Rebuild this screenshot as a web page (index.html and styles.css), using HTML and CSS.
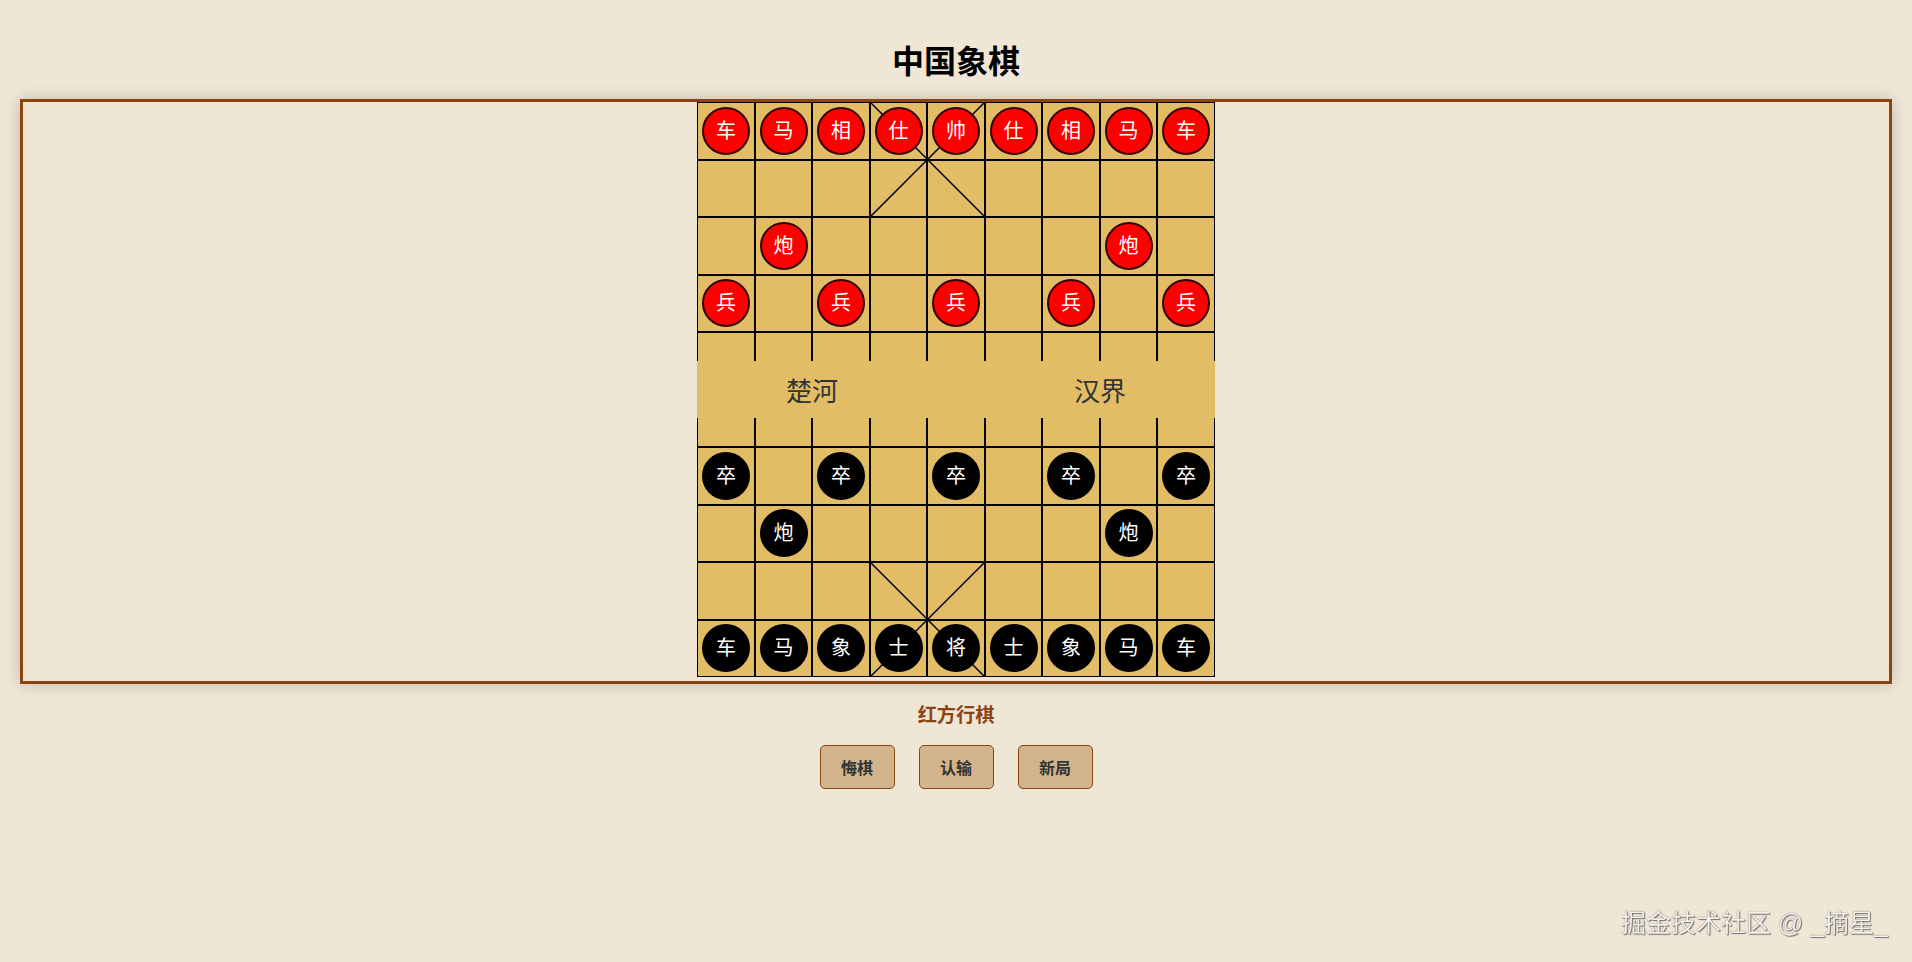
FILE: index.html
```html
<!DOCTYPE html>
<html lang="zh-CN">
<head>
    <meta charset="UTF-8">
    <meta name="viewport" content="width=device-width, initial-scale=1.0">
    <title>中国象棋</title>
    <link rel="stylesheet" href="styles.css">
</head>
<body>

    <h1>中国象棋</h1>

    <div class="board-wrap">
        <div class="board" id="board">
            <!-- 九宫斜线 -->
            <svg class="palace palace-top" viewBox="0 0 115 115">
                <line x1="0" y1="0" x2="115" y2="115"></line>
                <line x1="115" y1="0" x2="0" y2="115"></line>
            </svg>
            <svg class="palace palace-bottom" viewBox="0 0 115 115">
                <line x1="0" y1="0" x2="115" y2="115"></line>
                <line x1="115" y1="0" x2="0" y2="115"></line>
            </svg>

            <!-- 楚河汉界 -->
            <div class="river">
                <span>楚河</span>
                <span>汉界</span>
            </div>
        </div>
    </div>

    <div id="status" class="status">红方行棋</div>

    <div class="controls">
        <button type="button" class="btn" onclick="undoMove()">悔棋</button>
        <button type="button" class="btn" onclick="resign()">认输</button>
        <button type="button" class="btn" onclick="newGame()">新局</button>
    </div>

    <div class="watermark">掘金技术社区 @ _摘星_</div>

    <script>
        const board = document.getElementById('board');
        const statusText = document.getElementById('status');

        const redBack = ['车', '马', '相', '仕', '帅', '仕', '相', '马', '车'];
        const blackBack = ['车', '马', '象', '士', '将', '士', '象', '马', '车'];

        let pieces = [];
        let history = [];
        let turn = 'red';
        let selected = null;

        function initPieces() {
            const list = [];
            redBack.forEach((name, col) => list.push({ row: 0, col, name, side: 'red' }));
            list.push({ row: 2, col: 1, name: '炮', side: 'red' }, { row: 2, col: 7, name: '炮', side: 'red' });
            [0, 2, 4, 6, 8].forEach(col => list.push({ row: 3, col, name: '兵', side: 'red' }));

            [0, 2, 4, 6, 8].forEach(col => list.push({ row: 6, col, name: '卒', side: 'black' }));
            list.push({ row: 7, col: 1, name: '炮', side: 'black' }, { row: 7, col: 7, name: '炮', side: 'black' });
            blackBack.forEach((name, col) => list.push({ row: 9, col, name, side: 'black' }));
            return list;
        }

        function renderBoard() {
            board.querySelectorAll('.cell').forEach(cell => cell.remove());

            for (let row = 0; row < 10; row++) {
                for (let col = 0; col < 9; col++) {
                    const cell = document.createElement('div');
                    cell.className = 'cell';
                    cell.onclick = () => clickCell(row, col);

                    const piece = pieces.find(p => p.row === row && p.col === col);
                    if (piece) {
                        const el = document.createElement('div');
                        el.className = 'piece ' + piece.side;
                        if (piece === selected) el.classList.add('selected');
                        el.innerText = piece.name;
                        cell.appendChild(el);
                    }
                    board.appendChild(cell);
                }
            }

            statusText.innerText = turn === 'red' ? '红方行棋' : '黑方行棋';
        }

        function clickCell(row, col) {
            const target = pieces.find(p => p.row === row && p.col === col);

            if (target && target.side === turn) {
                selected = target;
            } else if (selected) {
                history.push(pieces.map(p => ({ ...p })));
                pieces = pieces.filter(p => p !== target);
                selected.row = row;
                selected.col = col;
                selected = null;
                turn = turn === 'red' ? 'black' : 'red';
            }
            renderBoard();
        }

        function undoMove() {
            if (!history.length) return;
            pieces = history.pop();
            selected = null;
            turn = turn === 'red' ? 'black' : 'red';
            renderBoard();
        }

        function resign() {
            statusText.innerText = turn === 'red' ? '红方认输，黑方胜' : '黑方认输，红方胜';
        }

        function newGame() {
            pieces = initPieces();
            history = [];
            turn = 'red';
            selected = null;
            renderBoard();
        }

        newGame();
    </script>

</body>
</html>
```

FILE: styles.css
```css
* {
    box-sizing: border-box;
}

body {
    margin: 0;
    padding: 20px;
    background-color: #f0e6d6;
    font-family: 'Liberation Sans', 'Noto Sans CJK SC', sans-serif;
    text-align: center;
}

h1 {
    font-size: 32px;
    line-height: 37px;
    margin: 24px 0 18px;
    color: #000;
}

.board-wrap {
    display: flex;
    justify-content: center;
    padding-bottom: 4px;
    border: 3px solid #8b4513;
    box-shadow: 0 0 15px rgba(0, 0, 0, 0.2);
}

.board {
    position: relative;
    display: grid;
    grid-template-columns: repeat(9, 57.5px);
    grid-template-rows: repeat(10, 57.5px);
    background-color: #e3bd66;
}

.cell {
    display: flex;
    justify-content: center;
    align-items: center;
    border: 1px solid #000;
    cursor: pointer;
}

.piece {
    position: relative;
    z-index: 2;
    display: flex;
    justify-content: center;
    align-items: center;
    width: 48px;
    height: 48px;
    border-radius: 50%;
    border: 2px solid #300;
    color: #fff;
    font-size: 20px;
    line-height: 1;
}

.piece.red {
    background-color: #f00;
}

.piece.black {
    background-color: #000;
    border-color: #000;
}

.piece.selected {
    box-shadow: 0 0 0 3px #ffd700;
}

.palace {
    position: absolute;
    left: 172.5px;
    width: 115px;
    height: 115px;
    z-index: 1;
    pointer-events: none;
}

.palace-top {
    top: 0;
}

.palace-bottom {
    top: 460px;
}

.palace line {
    stroke: #000;
    stroke-width: 1.5;
}

.river {
    position: absolute;
    left: 0;
    right: 0;
    top: 258.75px;
    height: 57.5px;
    z-index: 1;
    display: flex;
    justify-content: center;
    align-items: center;
    gap: 144px;
    background-color: #e3bd66;
    color: #333;
    font-size: 26px;
    pointer-events: none;
}

.river span {
    width: 144px;
}

.status {
    margin-top: 20px;
    font-size: 19.2px;
    line-height: 23px;
    font-weight: bold;
    color: #8b4513;
}

.controls {
    display: flex;
    justify-content: center;
    gap: 24px;
    margin-top: 18px;
}

.btn {
    width: 75px;
    height: 44px;
    padding: 0;
    font-family: 'Liberation Sans', 'Noto Sans CJK SC', sans-serif;
    font-size: 16px;
    font-weight: bold;
    color: #333;
    background-color: #d2b48c;
    border: 1px solid #8b4513;
    border-radius: 5px;
    cursor: pointer;
}

.btn:hover {
    background-color: #c4a174;
}

.watermark {
    position: fixed;
    right: 24px;
    bottom: 25px;
    font-size: 25px;
    line-height: 28px;
    color: #f6f2ea;
    text-shadow: 0 0 1px #444, 1px 1px 1px #777;
    pointer-events: none;
}
```
